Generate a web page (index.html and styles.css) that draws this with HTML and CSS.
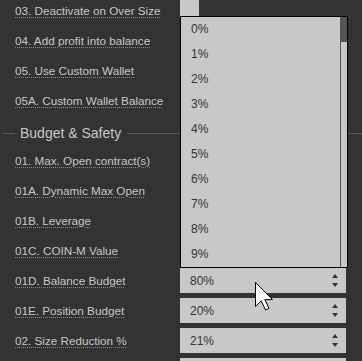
FILE: index.html
```html
<!DOCTYPE html>
<html>
<head>
<meta charset="utf-8">
<link rel="stylesheet" href="styles.css">
</head>
<body>
<div class="panel">
  <div class="row"><span class="label">03. Deactivate on Over Size</span><div class="check"></div></div>
  <div class="row"><span class="label">04. Add profit into balance</span><div class="check"></div></div>
  <div class="row"><span class="label">05. Use Custom Wallet</span><div class="check"></div></div>
  <div class="row"><span class="label">05A. Custom Wallet Balance</span><div class="field"></div></div>

  <div class="legend"><span class="line-short"></span><span class="legend-text">Budget &amp; Safety</span><span class="line"></span></div>

  <div class="row"><span class="label">01. Max. Open contract(s)</span><div class="field"></div></div>
  <div class="row"><span class="label">01A. Dynamic Max Open</span><div class="field"></div></div>
  <div class="row"><span class="label">01B. Leverage</span><div class="field"></div></div>
  <div class="row"><span class="label">01C. COIN-M Value</span><div class="field"></div></div>
  <div class="row"><span class="label">01D. Balance Budget</span><div class="field"><span>80%</span><span class="spin"><i class="up"></i><i class="down"></i></span></div></div>
  <div class="row"><span class="label">01E. Position Budget</span><div class="field"><span>20%</span><span class="spin"><i class="up"></i><i class="down"></i></span></div></div>
  <div class="row"><span class="label">02. Size Reduction %</span><div class="field"><span>21%</span><span class="spin"><i class="up"></i><i class="down"></i></span></div></div>
  <div class="row"><span class="label"></span><div class="field"></div></div>
</div>

<div class="dropdown">
  <ul class="options">
    <li>0%</li><li>1%</li><li>2%</li><li>3%</li><li>4%</li>
    <li>5%</li><li>6%</li><li>7%</li><li>8%</li><li>9%</li>
  </ul>
  <div class="scrollbar"><div class="thumb"></div></div>
</div>

<svg class="cursor" width="19" height="30" viewBox="0 0 19 30">
  <path d="M0.5 0.5 L0.5 24.5 L6.2 18.8 L10.5 28 L14 26.4 L9.8 17.6 L17.5 17.6 Z" fill="#fff" stroke="#000" stroke-width="1" stroke-linejoin="miter"/>
</svg>
</body>
</html>
```

FILE: styles.css
```css
html, body {
  margin: 0;
  padding: 0;
  background: #333333;
  overflow: hidden;
}

body {
  font-family: "Liberation Sans", Arial, sans-serif;
  font-size: 12px;
  color: #c8c8c8;
  width: 362px;
  height: 361px;
  position: relative;
}

.panel {
  margin-top: -2px;
}

.row {
  display: flex;
  align-items: center;
  height: 25px;
  margin-bottom: 5px;
}

.label {
  flex: 0 0 180px;
  box-sizing: border-box;
  padding-left: 15px;
  white-space: nowrap;
  font-size: 11.7px;
  text-decoration: underline dotted #8a8a8a;
  text-underline-offset: 2px;
  text-decoration-thickness: 1px;
}

.check {
  width: 19px;
  height: 25px;
  background: #c8c8c8;
  border-radius: 3px;
}

.field {
  width: 166px;
  height: 25px;
  box-sizing: border-box;
  background: #c8c8c8;
  color: #333;
  display: flex;
  align-items: center;
  justify-content: space-between;
  padding: 0 8px 0 10px;
}

.spin {
  display: flex;
  flex-direction: column;
  gap: 5px;
  margin-top: -1px;
}

.spin i {
  display: block;
  width: 0;
  height: 0;
  border-left: 3.5px solid transparent;
  border-right: 3.5px solid transparent;
}

.spin .up {
  border-bottom: 4px solid #333;
}

.spin .down {
  border-top: 4px solid #333;
}

.legend {
  display: flex;
  align-items: center;
  height: 30px;
}

.line-short {
  width: 12px;
  margin-left: 3px;
  border-top: 1px solid #595959;
}

.legend-text {
  font-size: 14px;
  padding: 0 6px 0 5px;
  color: #c8c8c8;
}

.line {
  flex: 1;
  border-top: 1px solid #595959;
}

.dropdown {
  position: absolute;
  left: 180px;
  top: 16px;
  width: 166px;
  height: 250px;
  border: 1px solid #000;
  background: #c8c8c8;
  display: flex;
}

.options {
  list-style: none;
  margin: 0;
  padding: 0;
  flex: 1;
}

.options li {
  height: 25px;
  line-height: 25px;
  padding-left: 10px;
  color: #333;
}

.scrollbar {
  width: 6px;
  border-left: 1px solid #555;
  position: relative;
}

.thumb {
  position: absolute;
  left: -1px;
  top: 0;
  width: 7px;
  height: 25px;
  background: #555;
}

.cursor {
  position: absolute;
  left: 255px;
  top: 282px;
}
```
